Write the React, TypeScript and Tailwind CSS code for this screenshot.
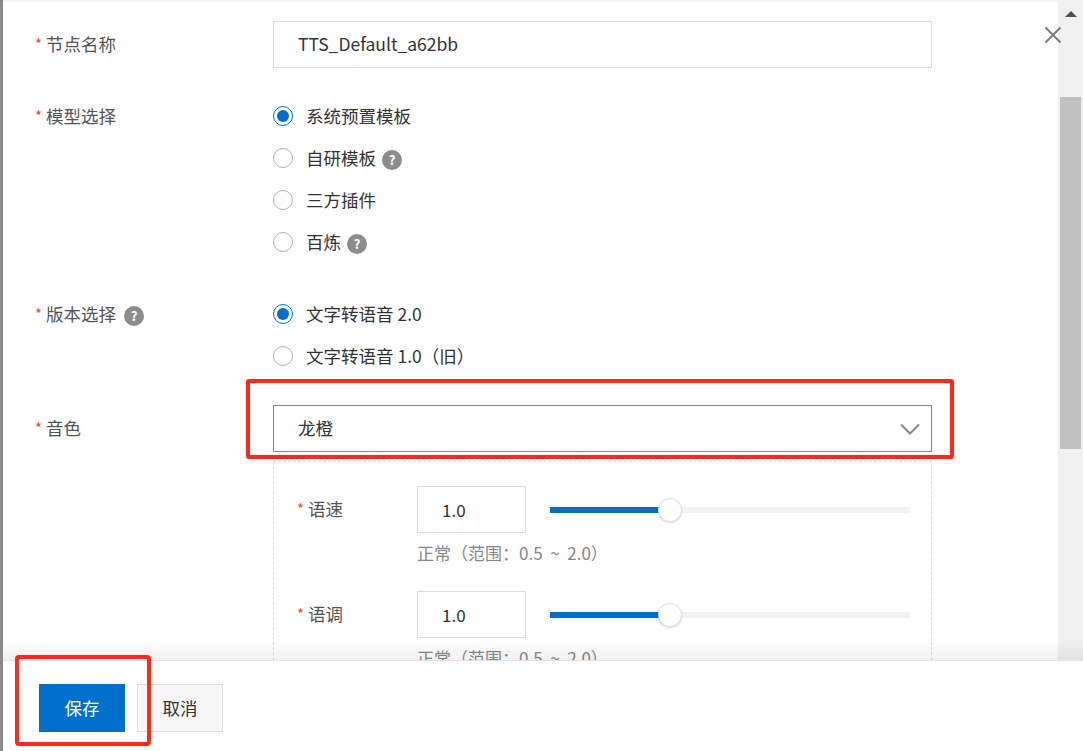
import React from 'react';

const font = { fontFamily: '"Noto Sans CJK SC", "Noto Sans", sans-serif' };

const Help = () => (
  <span className="inline-flex h-5 w-5 items-center justify-center rounded-full bg-[#8c8c8c] text-[13px] font-bold leading-none text-white">
    ?
  </span>
);

const Label = ({ text, help, h }: { text: string; help?: boolean; h: string }) => (
  <div className={`flex w-[238px] shrink-0 items-center gap-1 ${h}`}>
    <span className="text-[15px] text-[#e8493a]">*</span>
    <span className="text-[17.5px] text-[#555]">{text}</span>
    {help && <span className="ml-1"><Help /></span>}
  </div>
);

const Radio = ({ label, checked, help }: { label: string; checked?: boolean; help?: boolean }) => (
  <div className="flex h-[42px] items-center">
    <span
      className={`flex h-5 w-5 items-center justify-center rounded-full border ${
        checked ? 'border-[#0070cc]' : 'border-[#b3b3b3]'
      } bg-white`}
    >
      {checked && <span className="h-3 w-3 rounded-full bg-[#0070cc]" />}
    </span>
    <span className="ml-[13px] text-[17.5px] text-[#333]">{label}</span>
    {help && <span className="ml-[6px]"><Help /></span>}
  </div>
);

const SliderRow = ({ label }: { label: string }) => (
  <div>
    <div className="flex items-center">
      <div className="flex w-[120px] items-center gap-1">
        <span className="text-[15px] text-[#e8493a]">*</span>
        <span className="text-[17.5px] text-[#555]">{label}</span>
      </div>
      <div className="flex h-[47px] w-[109px] items-center border border-[#ddd] pl-6 text-[17px] text-[#333]">
        1.0
      </div>
      <div className="relative ml-6 h-[6px] w-[360px] bg-[#f2f2f2]">
        <div className="h-full w-[120px] bg-[#0070cc]" />
        <div className="absolute left-[108px] top-[-9px] h-6 w-6 rounded-full border border-[#ddd] bg-white shadow-[0_1px_2px_rgba(0,0,0,0.15)]" />
      </div>
    </div>
    <div className="ml-[120px] mt-2 text-[17px] leading-6 text-[#888]">正常（范围：0.5 &nbsp;~&nbsp; 2.0）</div>
  </div>
);

export default function App() {
  return (
    <div className="relative flex h-[751px] w-[1083px] overflow-hidden bg-white" style={font}>
      {/* page behind the drawer */}
      <div className="w-[3px] shrink-0 bg-[#8a8a8a]" />

      <div className="flex flex-1 flex-col">
        <div className="flex h-[660px]">
          {/* form */}
          <div className="relative flex-1 overflow-hidden border-t-2 border-[#f5f5f5] pl-[32px]">
            <div className="mt-[19px] flex">
              <Label text="节点名称" h="h-[47px]" />
              <div className="flex h-[47px] w-[659px] items-center border border-[#ddd] pl-6 text-[17.5px] text-[#333]">
                TTS_Default_a62bb
              </div>
            </div>

            <div className="mt-[27px] flex">
              <Label text="模型选择" h="h-[42px]" />
              <div>
                <Radio label="系统预置模板" checked />
                <Radio label="自研模板" help />
                <Radio label="三方插件" />
                <Radio label="百炼" help />
              </div>
            </div>

            <div className="mt-[30px] flex">
              <Label text="版本选择" help h="h-[42px]" />
              <div>
                <Radio label="文字转语音 2.0" checked />
                <Radio label="文字转语音 1.0（旧）" />
              </div>
            </div>

            <div className="mt-[28px] flex">
              <Label text="音色" h="h-[47px]" />
              <div className="w-[659px]">
                <div className="flex h-[47px] items-center justify-between border border-[#888] pl-6 pr-[11px] text-[17.5px] text-[#333]">
                  龙橙
                  <svg width="20" height="12" viewBox="0 0 20 12" fill="none" stroke="#888" strokeWidth="2">
                    <path d="M1 1.5 L10 10.5 L19 1.5" />
                  </svg>
                </div>
                <div className="mt-[9px] h-[300px] border border-dashed border-[#ddd] pl-[23px] pt-6">
                  <SliderRow label="语速" />
                  <div className="mt-[26px]">
                    <SliderRow label="语调" />
                  </div>
                </div>
              </div>
            </div>

            {/* annotation */}
            <div className="absolute left-[243px] top-[377px] h-[80px] w-[708px] rounded-[3px] border-4 border-[#ff2a1a]" />
          </div>

          {/* scrollbar */}
          <div className="flex w-[25px] shrink-0 flex-col items-center bg-[#f0f0f0]">
            <div className="mt-[11px] h-0 w-0 border-x-[6px] border-b-[6px] border-x-transparent border-b-[#505050]" />
            <div className="mt-[80px] h-[352px] w-[21px] bg-[#c1c1c1]" />
          </div>
        </div>

        {/* footer */}
        <div className="relative flex flex-1 items-start gap-3 border-t border-[#e2e2e2] bg-white pl-[36px] pt-[23px]">
          <div className="pointer-events-none absolute left-0 right-0 top-[-21px] h-5 bg-gradient-to-b from-transparent to-black/[0.06]" />
          <button className="h-12 w-[86px] bg-[#0070cc] text-[17.5px] text-white">保存</button>
          <button className="h-12 w-[86px] border border-[#ddd] bg-[#f7f7f7] text-[17.5px] text-[#333]">取消</button>
          <div className="absolute left-[12px] top-[-6px] h-[91px] w-[136px] rounded-[4px] border-4 border-[#ff2a1a]" />
        </div>
      </div>

      {/* close */}
      <button className="absolute left-[1044px] top-[26px]">
        <svg width="18" height="18" viewBox="0 0 18 18" stroke="#7d7d7d" strokeWidth="2">
          <path d="M1.5 1.5 L16.5 16.5 M16.5 1.5 L1.5 16.5" />
        </svg>
      </button>
    </div>
  );
}
